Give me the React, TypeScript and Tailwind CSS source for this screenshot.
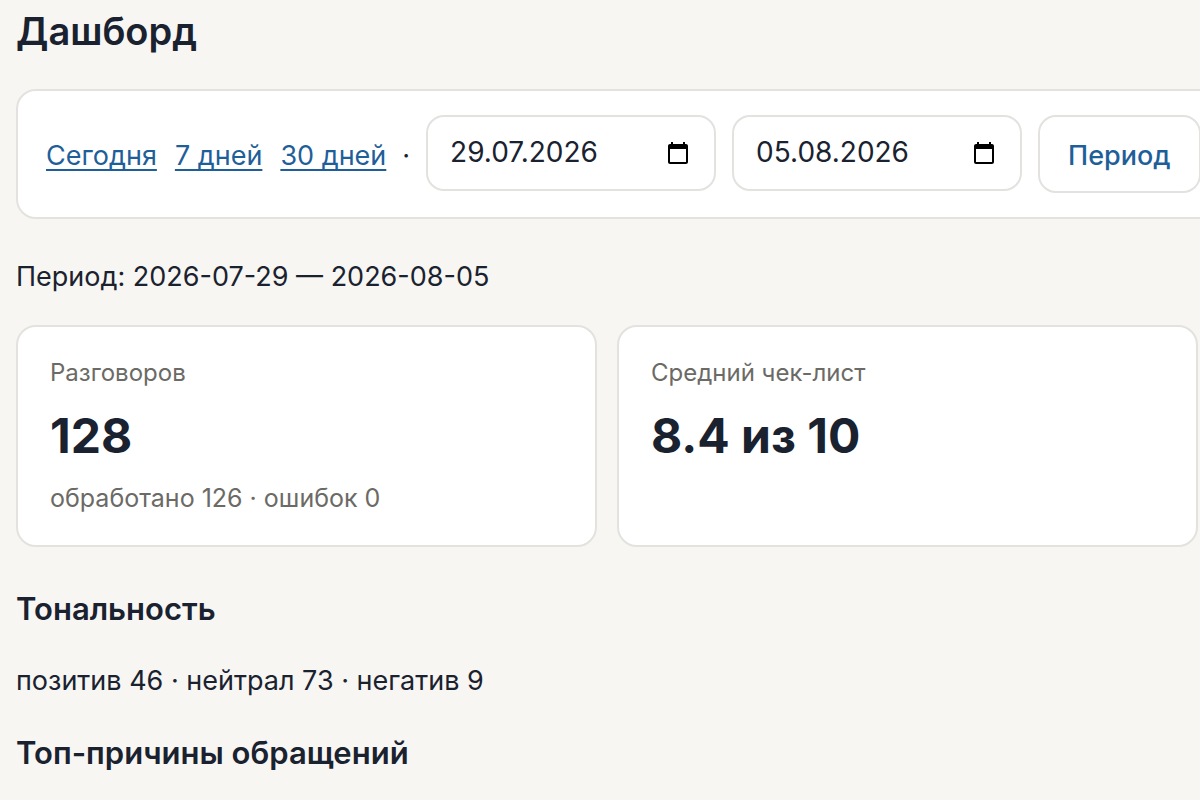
import { useState } from 'react';

interface DateFieldProps {
  id: string;
  label: string;
  value: string;
  onChange: (value: string) => void;
}

interface StatCardProps {
  label: string;
  value: string;
  note?: string;
}

const ranges = ['Сегодня', '7 дней', '30 дней'];

const DateField = ({ id, label, value, onChange }: DateFieldProps) => {
  return (
    <div className="flex h-19 w-[290px] shrink-0 items-start rounded-[18px] border-2 border-[#e3e2de] bg-white pt-4 pr-6 pl-[22px]">
      <input
        id={id}
        type="text"
        aria-label={label}
        value={value}
        onChange={(e) => onChange(e.target.value)}
        className="h-[38px] w-full min-w-0 bg-transparent text-[28px] leading-[38px] outline-none"
      />
      <button type="button" aria-label="Открыть календарь" className="flex h-10 shrink-0 items-center text-black">
        <svg width="24" height="24" viewBox="0 0 24 24" fill="currentColor">
          <path d="M20 3h-1V1h-2v2H7V1H5v2H4c-1.1 0-2 .9-2 2v16c0 1.1.9 2 2 2h16c1.1 0 2-.9 2-2V5c0-1.1-.9-2-2-2zm0 18H4V8h16v13z" />
        </svg>
      </button>
    </div>
  );
};

const StatCard = ({ label, value, note }: StatCardProps) => {
  return (
    <div className="min-h-[222px] rounded-[20px] border-2 border-[#e3e2de] bg-white px-8 pt-7 pb-5">
      <p className="text-2xl leading-9 text-[#6b6a65]">{label}</p>
      <p className="mt-3 text-5xl leading-[66px] font-bold">{value}</p>
      {note && <p className="mt-2 text-[25px] leading-[42px] text-[#6b6a65]">{note}</p>}
    </div>
  );
};

export default function App() {
  const [from, setFrom] = useState('29.07.2026');
  const [to, setTo] = useState('05.08.2026');

  return (
    <main className="min-h-screen overflow-hidden bg-[#f7f6f2] pt-1 pr-0.5 pl-4 font-['Inter',sans-serif] text-[27px] leading-11 text-[#1a2230]">
      <h1 className="text-[38px] leading-[54px] font-semibold">Дашборд</h1>

      <form
        onSubmit={(e) => e.preventDefault()}
        className="mt-[31px] -mr-8 flex items-start gap-4 rounded-[20px] border-2 border-[#e3e2de] bg-white px-7 py-6"
      >
        <nav className="flex h-[78px] shrink-0 items-center gap-[18px] pt-1 text-[#1f5f99]">
          {ranges.map((range) => (
            <a key={range} href="#" className="whitespace-nowrap underline underline-offset-4">
              {range}
            </a>
          ))}
        </nav>
        <span className="flex h-[78px] items-center pt-1">·</span>
        <DateField id="from" label="Начало периода" value={from} onChange={setFrom} />
        <DateField id="to" label="Конец периода" value={to} onChange={setTo} />
        <button
          type="submit"
          className="h-[78px] shrink-0 rounded-[18px] border-2 border-[#e3e2de] bg-white px-7 pt-1 font-medium text-[#1f5f99]"
        >
          Период
        </button>
      </form>

      <p className="mt-9">Период: 2026-07-29 — 2026-08-05</p>

      <section className="mt-[26px] grid grid-cols-2 gap-5">
        <StatCard label="Разговоров" value="128" note="обработано 126 · ошибок 0" />
        <StatCard label="Средний чек-лист" value="8.4 из 10" />
      </section>

      <h2 className="mt-10 text-[31px] leading-11 font-semibold">Тональность</h2>
      <p className="mt-7">позитив 46 · нейтрал 73 · негатив 9</p>
      <h2 className="mt-7 text-[31px] leading-11 font-semibold">Топ-причины обращений</h2>
    </main>
  );
}
